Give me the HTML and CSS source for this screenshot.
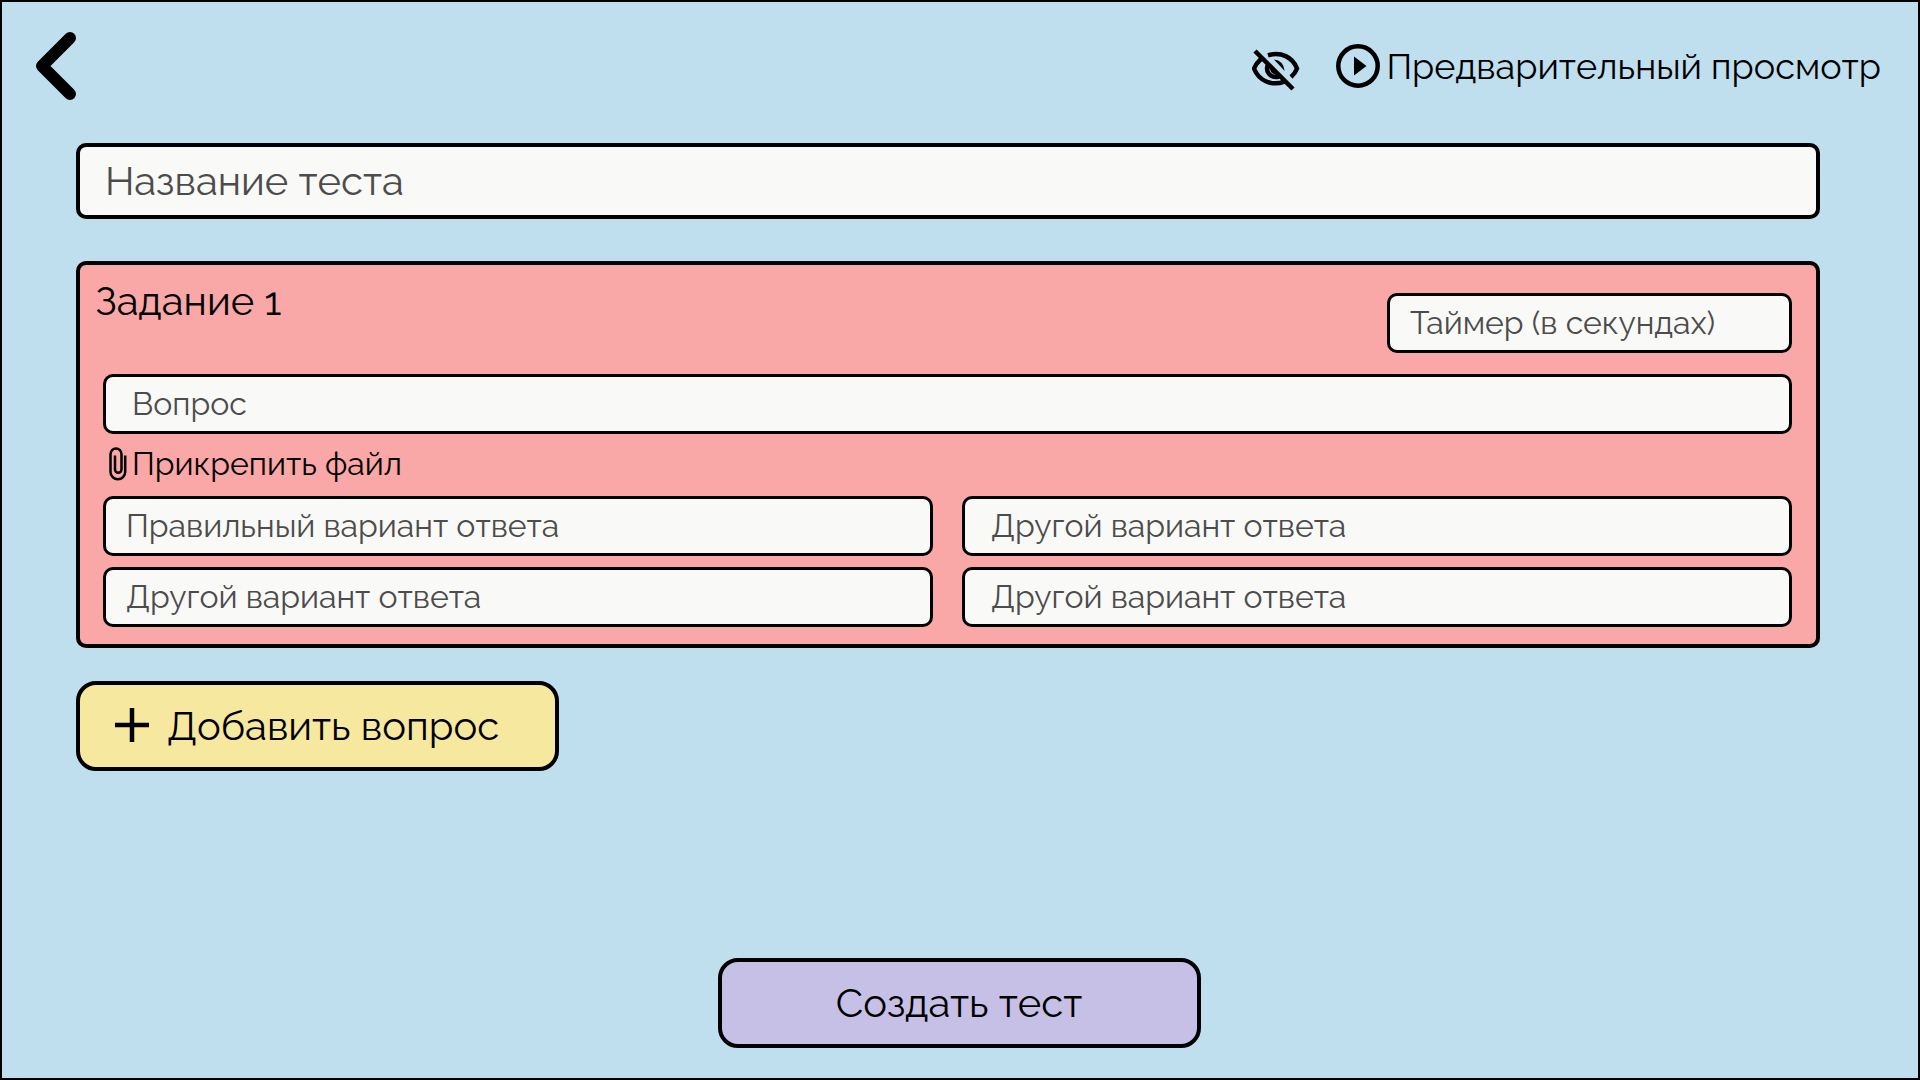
FILE: index.html
```html
<!DOCTYPE html>
<html lang="ru">
<head>
  <meta charset="utf-8">
  <meta name="viewport" content="width=device-width, initial-scale=1">
  <title>Создание теста</title>
  <link rel="stylesheet" href="styles.css">
</head>
<body>
  <div class="page">
    <header class="topbar">
      <button class="icon-button" type="button" aria-label="Назад">
        <svg class="icon-back" viewBox="0 0 40 68" aria-hidden="true"><path d="M34 6 6 34 34 62" fill="none" stroke="currentColor" stroke-width="12" stroke-linecap="round" stroke-linejoin="round"/></svg>
      </button>
      <div class="topbar-actions">
        <button class="icon-button" type="button" aria-label="Скрыть тест">
          <svg class="icon-eye" viewBox="0 -9 48 52" fill="none" stroke="currentColor" aria-hidden="true">
            <path d="M3 2 41 40" stroke-width="4.500"/>
            <path d="M16 6.300C29 2.500 40.500 8 45 19.500Q43.200 24.500 39 28" stroke-width="4.500"/>
            <path d="M9.500 9.500Q4.300 14 2 19.500C7 32 19.500 37.300 32.500 32.600" stroke-width="4.500"/>
            <path d="M16.500 14.500C12.500 22 18 30 27 27.500" stroke-width="4.500"/>
            <path d="M22 10.500Q31.500 11.500 32.700 22Z" fill="currentColor" stroke="none"/>
            <path d="M19.800 18.500Q19.300 24.200 25 24.200" stroke-width="3"/>
          </svg>
        </button>
        <button class="icon-button preview" type="button">
          <svg class="icon-play" viewBox="0 0 44 44" aria-hidden="true"><circle cx="22" cy="22" r="19.700" fill="none" stroke="currentColor" stroke-width="4.500"/><path d="M18 12.500 30.500 22 18 31.500Z" fill="currentColor"/></svg>
          Предварительный просмотр
        </button>
      </div>
    </header>

    <form class="editor">
      <input class="field field-title" type="text" placeholder="Название теста" aria-label="Название теста">

      <fieldset class="task" aria-labelledby="task-title">
        <div class="task-head">
          <h2 class="task-title" id="task-title">Задание 1</h2>
          <input class="field field-timer" type="text" placeholder="Таймер (в секундах)" aria-label="Таймер (в секундах)">
        </div>
        <input class="field field-wide" type="text" placeholder="Вопрос" aria-label="Вопрос">
        <button class="icon-button attach" type="button">
          <svg class="icon-clip" viewBox="0 0 18 34" aria-hidden="true"><path d="M16.200 8.500V25a7.200 7.200 0 0 1-14.700 0V7a5.500 5.500 0 0 1 11 0V22.500a3.200 3.200 0 0 1-6.500 0V8.500" fill="none" stroke="currentColor" stroke-width="2.500"/></svg>
          Прикрепить файл
        </button>
        <div class="answers">
          <input class="field" type="text" placeholder="Правильный вариант ответа" aria-label="Правильный вариант ответа">
          <input class="field field-wide" type="text" placeholder="Другой вариант ответа" aria-label="Другой вариант ответа 1">
          <input class="field" type="text" placeholder="Другой вариант ответа" aria-label="Другой вариант ответа 2">
          <input class="field field-wide" type="text" placeholder="Другой вариант ответа" aria-label="Другой вариант ответа 3">
        </div>
      </fieldset>

      <button class="button button-add" type="button">
        <svg class="icon-plus" viewBox="0 0 34 34" aria-hidden="true"><path d="M17 0V34M0 17H34" fill="none" stroke="currentColor" stroke-width="4.500"/></svg>
        Добавить вопрос
      </button>

      <button class="button button-create" type="submit">Создать тест</button>
    </form>
  </div>
</body>
</html>
```
FILE: styles.css
```css
*,
*::before,
*::after {
  box-sizing: border-box;
}

body {
  margin: 0;
  font-family: Raleway, "Open Sans", sans-serif;
  font-weight: 400;
  color: #000;
}

button,
input {
  font: inherit;
  color: inherit;
}

svg {
  display: block;
  flex: none;
}

.page {
  display: flex;
  flex-direction: column;
  min-height: 100vh;
  border: 2px solid #000;
  background: #bfdfef;
}

.topbar {
  display: flex;
  align-items: center;
  justify-content: space-between;
  padding: 30px 37px 0 34px;
}

.topbar-actions {
  display: flex;
  align-items: center;
  gap: 36px;
}

.icon-button {
  display: flex;
  align-items: center;
  padding: 0;
  border: 0;
  background: none;
  cursor: pointer;
}

.icon-back {
  width: 40px;
  height: 68px;
}

.icon-eye {
  width: 48px;
  height: 52px;
}

.icon-play {
  width: 44px;
  height: 44px;
}

.preview {
  gap: 6px;
  font-size: 36px;
  line-height: 42px;
}

.editor {
  display: flex;
  flex: 1;
  flex-direction: column;
  padding: 43px 98px 30px 74px;
}

.field {
  width: 100%;
  min-width: 0;
  height: 60px;
  padding: 0 20px 2px;
  border: 3px solid #000;
  border-radius: 10px;
  background: #f9f9f7;
  font-size: 32px;
}

.field::placeholder {
  color: #4c4c4c;
  opacity: 1;
}

.field-wide {
  padding: 0 26px 2px;
}

.field-title {
  height: 76px;
  padding: 0 25px 2px;
  border-width: 4px;
  font-size: 40px;
}

.task {
  min-width: 0;
  margin: 42px 0 33px;
  padding: 14px 24px 17px 23px;
  border: 4px solid #000;
  border-radius: 10px;
  background: #faa7a8;
}

.task-head {
  display: flex;
  justify-content: space-between;
  margin: 0 0 21px -8px;
}

.task-title {
  margin: 0;
  font-size: 40px;
  font-weight: 400;
  line-height: 44px;
}

.field-timer {
  width: 405px;
  margin-top: 14px;
}

.attach {
  gap: 5px;
  height: 62px;
  padding: 0 0 3px 6px;
  font-size: 32px;
}

.icon-clip {
  width: 18px;
  height: 34px;
}

.answers {
  display: grid;
  grid-template-columns: 1fr 1fr;
  gap: 11px 29px;
}

.button {
  display: flex;
  align-items: center;
  width: 483px;
  height: 90px;
  padding: 0 35px 2px;
  border: 4px solid #000;
  border-radius: 20px;
  font-size: 40px;
  cursor: pointer;
}

.button-add {
  gap: 18px;
  background: #f7e8a0;
}

.icon-plus {
  width: 34px;
  height: 34px;
}

.button-create {
  align-self: center;
  justify-content: center;
  margin: auto -22px 0 0;
  background: #c6c0e6;
}
```
